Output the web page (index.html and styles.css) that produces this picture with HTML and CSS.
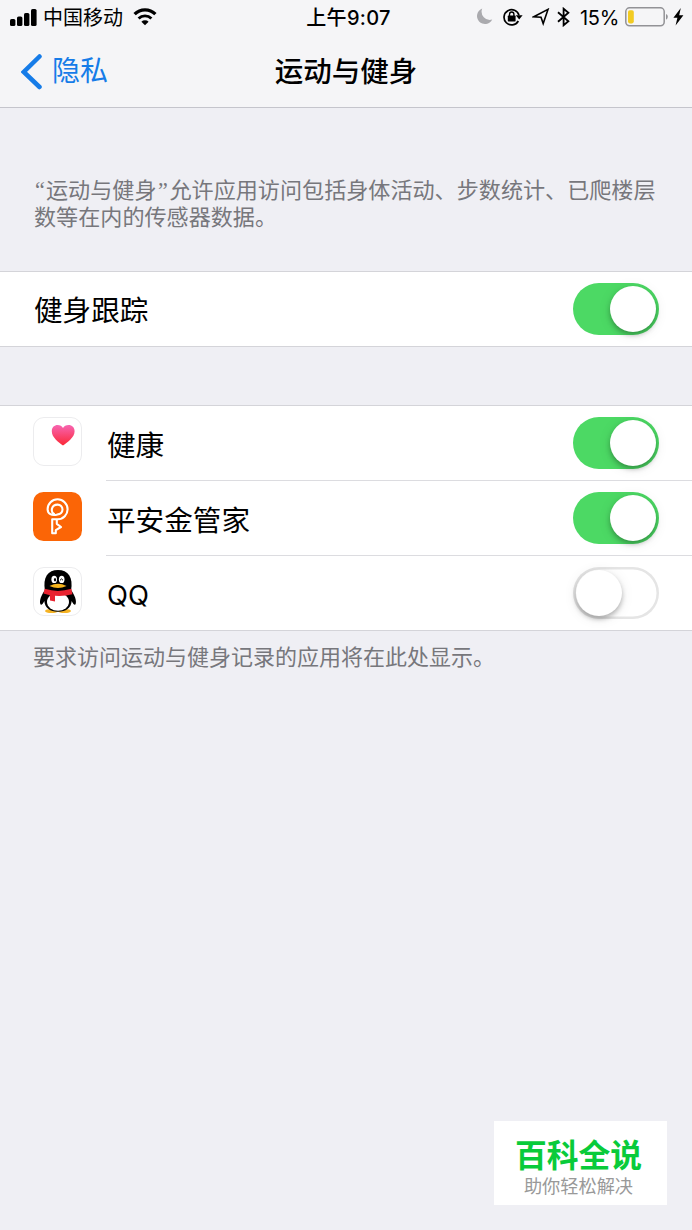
FILE: index.html
```html
<!DOCTYPE html>
<html lang="zh-CN">
<head>
<meta charset="utf-8">
<title>运动与健身</title>
<link rel="stylesheet" href="styles.css">
</head>
<body>
<header class="header">
  <div class="status">
    <div class="status-left">
      <svg class="signal" width="27" height="18" viewBox="0 0 27 18"><rect x="0" y="10" width="5.4" height="7" rx="1.6"/><rect x="7" y="7.5" width="5.4" height="9.5" rx="1.6"/><rect x="14" y="4" width="5.4" height="13" rx="1.6"/><rect x="21" y="0" width="5.6" height="17" rx="1.6"/></svg>
      <span class="carrier">中国移动</span>
      <svg class="wifi" width="24" height="18" viewBox="0 0 24 18"><path d="M1.600 6.200a14.700 14.700 0 0 1 20.800 0" fill="none" stroke="#000" stroke-width="3.3"/><path d="M5.600 10.500a9 9 0 0 1 12.800 0" fill="none" stroke="#000" stroke-width="2.8"/><path d="M8.400 13.700a5.200 5.200 0 0 1 7.200 0L12 17.200z"/></svg>
    </div>
    <div class="time">上午9:07</div>
    <div class="status-right">
      <svg class="moon" width="16" height="17" viewBox="0 0 16 17"><path d="M5.200.6A8 8 0 1 0 15.200 11.600 8.300 8.300 0 0 1 5.200.6z" fill="#aaaaae"/></svg>
      <svg class="lock" width="20" height="18" viewBox="0 0 20 18"><path d="M15.300 13A7.600 7.600 0 1 1 16 7.400" fill="none" stroke="#000" stroke-width="1.7"/><path d="M12.800 7.200h6.800l-3.400 4.300z"/><rect x="4.800" y="7.600" width="7.800" height="5.800" rx=".6"/><path d="M6.500 8V6.200a2.200 2.200 0 0 1 4.400 0V8" fill="none" stroke="#000" stroke-width="1.400"/></svg>
      <svg class="arrow" width="18" height="18" viewBox="0 0 18 18"><path d="M1.800 8.800 16 1.400 11.200 15.600 9 9.200z" fill="none" stroke="#000" stroke-width="1.6"/></svg>
      <svg class="bluetooth" width="13" height="20" viewBox="0 0 13 20"><path d="M1 5.200 11.400 14.300 6.600 18.300V1.700L11.400 5.700 1 14.800" fill="none" stroke="#000" stroke-width="1.8"/></svg>
      <span class="percent">15%</span>
      <svg class="battery" width="43" height="20" viewBox="0 0 43 20"><rect x=".8" y=".8" width="38.400" height="18" rx="3.800" fill="none" stroke="#929296" stroke-width="1.5"/><rect x="3" y="3.200" width="5.800" height="13.200" rx="1.800" fill="#f2cb22"/><path d="M41 7q1.800.7 1.800 2.800T41 12.700z" fill="#929296"/></svg>
      <svg class="bolt" width="11" height="18" viewBox="0 0 11 18"><path d="M7.800 0 .4 9.800h4L2.600 17.400 10.400 7.200H6.200z"/></svg>
    </div>
  </div>
  <nav class="nav">
    <a class="back"><svg width="21" height="36" viewBox="0 0 21 36"><path d="M18.500 2.500 2.800 18 18.500 33" fill="none" stroke="#167ce8" stroke-width="4.500" stroke-linecap="round"/></svg><span>隐私</span></a>
    <h1 class="title">运动与健身</h1>
  </nav>
</header>
<main>
  <p class="intro"><span class="quote">“</span>运动与健身<span class="quote close">”</span>允许应用访问包括身体活动、步数统计、已爬楼层<br>数等在内的传感器数据。</p>
  <section class="group">
    <div class="row"><span class="label">健身跟踪</span><span class="switch on"><i class="knob"></i></span></div>
  </section>
  <section class="group apps">
    <div class="row">
      <svg class="icon" viewBox="0 0 49 49"><rect x=".5" y=".5" width="48" height="48" rx="10.500" fill="#fff" stroke="#ececee"/><defs><linearGradient id="heart" x1="0" y1="0" x2="0" y2="1"><stop stop-color="#f765b2"/><stop offset="1" stop-color="#fb2836"/></linearGradient></defs><path d="M30 28.500C25.500 25 18.800 20.500 18.800 14.200C18.800 10.200 21.500 8 24.600 8C27 8 29 9.200 30 11.100C31 9.200 33 8 35.600 8C39 8 41.600 10.400 41.600 14.200C41.600 20.500 34.500 25 30 28.500Z" fill="url(#heart)"/></svg>
      <span class="label">健康</span><span class="switch on"><i class="knob"></i></span>
    </div>
    <div class="row">
      <svg class="icon" viewBox="0 0 49 49"><rect width="49" height="49" rx="10.500" fill="#fb6506"/><g fill="none" stroke="#fff" stroke-width="2.100" stroke-linejoin="round" stroke-linecap="round"><path d="M21 22C17.500 20 18 12.600 24.600 12.600A4.900 4.900 0 1 1 24.600 22.400C18.500 24.200 14.600 21.500 14.600 17.300A10 10 0 1 1 24.800 27.300H19.200V41.200H22.800V38.200L28 35 23.800 31.800V27.500"/></g></svg>
      <span class="label">平安金管家</span><span class="switch on"><i class="knob"></i></span>
    </div>
    <div class="row">
      <svg class="icon" viewBox="0 0 49 49"><rect x=".5" y=".5" width="48" height="48" rx="10.500" fill="#fff" stroke="#ececee"/><ellipse cx="18.500" cy="44" rx="6.500" ry="2" fill="#f5b324"/><ellipse cx="31.500" cy="44" rx="6.500" ry="2" fill="#f5b324"/><path d="M12 23C8.500 27.500 6 34 7.400 37.200C8.200 38.500 10 37 11.300 34C12 41 17 44.800 25 44.800S38 41 38.700 34C40 37 41.800 38.500 42.600 37.200C44 34 41.500 27.500 38 23Z"/><ellipse cx="25" cy="34.800" rx="11" ry="9" fill="#fff"/><path d="M12 24C9.500 10 15 3 25 3S40.500 10 38 24Z"/><ellipse cx="21.200" cy="12.400" rx="2.800" ry="3.700" fill="#fff"/><ellipse cx="28.700" cy="12.400" rx="2.800" ry="3.700" fill="#fff"/><ellipse cx="22" cy="12.700" rx="1.100" ry="1.700"/><path d="M27 13.300Q28.600 10.500 30 13.300" fill="none" stroke="#000"/><path d="M16.500 19Q25 14.700 33.500 19Q25 23 16.500 19Z" fill="#f7b51d"/><path d="M11.700 21.800Q25 26 38.300 21.800L39.400 27.200Q31 29.500 22 28.800V34.500L17 33.600V28.200L10.500 26.500Z" fill="#e92330"/></svg>
      <span class="label latin">QQ</span><span class="switch"><i class="knob"></i></span>
    </div>
  </section>
  <p class="note">要求访问运动与健身记录的应用将在此处显示。</p>
</main>
<aside class="brand"><strong>百科全说</strong><span>助你轻松解决</span></aside>
</body>
</html>
```
FILE: styles.css
```css
* { box-sizing: border-box; }
body { margin: 0; width: 692px; height: 1230px; overflow: hidden; background: #efeff4; color: #000; font-family: Inter, "Noto Sans CJK SC", sans-serif; }
svg { display: block; flex: none; }
.header { height: 108px; background: #f5f5f7; border-bottom: 1px solid #c5c5cc; }
.status { display: grid; grid-template-columns: 1fr auto 1fr; height: 35px; padding: 0 8px 0 10px; align-items: center; font-size: 20px; line-height: 34px; white-space: nowrap; }
.status-left, .status-right { display: flex; align-items: center; }
.status-right { justify-content: flex-end; }
.status-right svg { margin-bottom: 2px; }
.carrier { margin-left: 6px; padding-top: 1px; }
.wifi { margin: 0 0 1px 10px; }
.time { font-weight: 500; padding-left: 3px; letter-spacing: .3px; }
.lock { margin-left: 10px; }
.arrow { margin-left: 9px; }
.bluetooth { margin-left: 7px; }
.percent { margin-left: 10px; letter-spacing: -.3px; }
.status-right .battery { margin: 0 0 1px 6px; }
.bolt { margin-left: 5px; }
.nav { display: grid; grid-template-columns: 1fr auto 1fr; height: 72px; align-items: center; }
.back { display: flex; align-items: center; gap: 10px; padding-left: 21px; color: #167ce8; font-size: 28px; line-height: 71px; }
.title { margin: 0; font-size: 28.5px; line-height: 72px; font-weight: 500; padding-top: 1px; }
.intro { margin: 0; height: 163px; padding: 69px 0 0 34px; font-size: 22.1px; line-height: 27px; color: #77777c; white-space: nowrap; }
.quote { display: inline-block; width: 12px; text-align: center; font-family: "Liberation Serif", serif; line-height: 20px; }
.quote.close { width: 13px; }
.group { background: #fff; border-top: 1px solid #d4d4d9; border-bottom: 1px solid #d4d4d9; }
.apps { margin-top: 58px; }
.row { display: flex; align-items: center; height: 74px; padding: 0 33px; }
.row .label { font-size: 28.6px; line-height: 74px; padding: 4px 0 0 1px; }
.apps .row { height: 75px; }
.apps .row:last-child { height: 74px; }
/* The label runs under the switch so its divider reaches the screen edge. */
.apps .label { flex: 1; align-self: stretch; margin: 0 -119px 0 24px; padding: 3px 0 0 1px; }
.apps .row:not(:last-child) .label { border-bottom: 1px solid #dcdce0; }
.row .latin { font-size: 27.4px; padding-top: 2px; }
.icon { width: 49px; height: 49px; margin-bottom: 4px; }
.switch { flex: none; width: 86px; height: 52px; margin-left: auto; padding: 3px; display: flex; border-radius: 26px; background: #fff; box-shadow: inset 0 0 0 2.5px #e5e5e5; }
.apps .switch { margin-bottom: 1px; }
.apps .row:last-child .switch { margin-bottom: 0; }
.switch.on { justify-content: flex-end; background: #4cd964; box-shadow: none; }
.knob { width: 46px; height: 46px; border-radius: 50%; background: #fff; box-shadow: 0 3px 5px rgba(0,0,0,.27), 0 2px 14px rgba(0,0,0,.09); }
.note { margin: 0; padding: 13px 0 0 33px; font-size: 22px; line-height: 27px; color: #77777c; }
.brand { position: absolute; left: 494px; top: 1121px; width: 173px; height: 84px; display: flex; flex-direction: column; align-items: center; padding: 17px 4px 0 0; background: #fff; }
.brand strong { font-size: 31.8px; line-height: 36px; font-weight: 700; color: #09cb3a; }
.brand span { font-size: 18.2px; line-height: 24px; color: #999; }
```
